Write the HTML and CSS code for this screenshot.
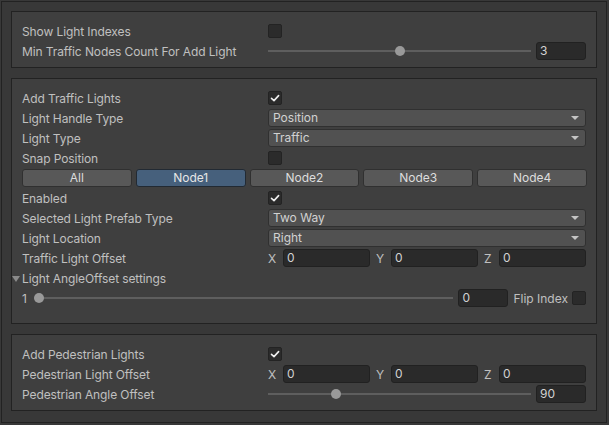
FILE: index.html
```html
<!DOCTYPE html>
<html>
<head>
<meta charset="utf-8">
<link rel="stylesheet" href="styles.css">
</head>
<body>
<div class="frame">
  <div class="box box-first">
    <div class="row"><div class="label">Show Light Indexes</div><div class="ctrl"><span class="check"></span></div></div>
    <div class="row"><div class="label">Min Traffic Nodes Count For Add Light</div>
      <div class="ctrl"><div class="slider"><div class="track"><span class="thumb" style="left:50%"></span></div></div><div class="field num">3</div></div></div>
  </div>

  <div class="box box-mid">
    <div class="row"><div class="label">Add Traffic Lights</div><div class="ctrl"><span class="check on"><svg viewBox="0 0 14 14" width="14" height="14"><path d="M3.5 7.3 L6 9.6 L10.6 4.6" fill="none" stroke="#eeeeee" stroke-width="1.6" stroke-linecap="round" stroke-linejoin="round"/></svg></span></div></div>
    <div class="row"><div class="label">Light Handle Type</div><div class="ctrl"><div class="dropdown">Position<span class="arrow"></span></div></div></div>
    <div class="row"><div class="label">Light Type</div><div class="ctrl"><div class="dropdown">Traffic<span class="arrow"></span></div></div></div>
    <div class="row"><div class="label">Snap Position</div><div class="ctrl"><span class="check"></span></div></div>
    <div class="row buttons">
      <div class="btn">All</div><div class="btn sel">Node1</div><div class="btn">Node2</div><div class="btn">Node3</div><div class="btn">Node4</div>
    </div>
    <div class="row"><div class="label">Enabled</div><div class="ctrl"><span class="check on"><svg viewBox="0 0 14 14" width="14" height="14"><path d="M3.5 7.3 L6 9.6 L10.6 4.6" fill="none" stroke="#eeeeee" stroke-width="1.6" stroke-linecap="round" stroke-linejoin="round"/></svg></span></div></div>
    <div class="row"><div class="label">Selected Light Prefab Type</div><div class="ctrl"><div class="dropdown">Two Way<span class="arrow"></span></div></div></div>
    <div class="row"><div class="label">Light Location</div><div class="ctrl"><div class="dropdown">Right<span class="arrow"></span></div></div></div>
    <div class="row"><div class="label">Traffic Light Offset</div>
      <div class="ctrl vec">
        <div class="axis"><span class="ax">X</span><div class="field">0</div></div>
        <div class="axis"><span class="ax">Y</span><div class="field">0</div></div>
        <div class="axis"><span class="ax">Z</span><div class="field">0</div></div>
      </div></div>
    <div class="row fold"><span class="fold-arrow"></span><div class="label">Light AngleOffset settings</div></div>
    <div class="row angle">
      <span class="small">1</span>
      <div class="slider"><div class="track"><span class="thumb" style="left:0%"></span></div></div>
      <div class="field num">0</div>
      <span class="small flip">Flip Index</span>
      <span class="check"></span>
    </div>
  </div>

  <div class="box box-last">
    <div class="row"><div class="label">Add Pedestrian Lights</div><div class="ctrl"><span class="check on"><svg viewBox="0 0 14 14" width="14" height="14"><path d="M3.5 7.3 L6 9.6 L10.6 4.6" fill="none" stroke="#eeeeee" stroke-width="1.6" stroke-linecap="round" stroke-linejoin="round"/></svg></span></div></div>
    <div class="row"><div class="label">Pedestrian Light Offset</div>
      <div class="ctrl vec">
        <div class="axis"><span class="ax">X</span><div class="field">0</div></div>
        <div class="axis"><span class="ax">Y</span><div class="field">0</div></div>
        <div class="axis"><span class="ax">Z</span><div class="field">0</div></div>
      </div></div>
    <div class="row"><div class="label">Pedestrian Angle Offset</div>
      <div class="ctrl"><div class="slider"><div class="track"><span class="thumb" style="left:25%"></span></div></div><div class="field num">90</div></div></div>
  </div>
</div>
</body>
</html>
```
FILE: styles.css
```css
* { box-sizing: border-box; }
html, body { margin: 0; padding: 0; }
body {
  background: #383838;
  font-family: Inter, "Noto Sans", sans-serif;
  font-size: 12px;
  color: #c0c0c0;
  width: 609px;
  height: 425px;
  overflow: hidden;
}
.frame {
  margin: 1px 0 0 1px;
  width: 606px;
  height: 422px;
  border: 1px solid #222222;
  padding: 9px 9px 0 9px;
  display: flex;
  flex-direction: column;
  gap: 10px;
}
.box {
  background: #3f3f3f;
  border: 1px solid #222222;
  padding: 9px 10px 6px 10px;
  width: 586px;
}
.box-mid { padding-bottom: 15px; }
.row {
  height: 20px;
  display: flex;
  align-items: center;
  position: relative;
}
.label {
  width: 246px;
  flex: none;
  white-space: nowrap;
  letter-spacing: -0.1px;
}
.ctrl {
  flex: 1;
  display: flex;
  align-items: center;
  height: 18px;
}
.check {
  width: 14px;
  height: 14px;
  background: #2b2b2b;
  border: 1px solid #232323;
  border-radius: 2px;
  display: inline-flex;
  align-items: center;
  justify-content: center;
  flex: none;
}
.check svg { display: block; margin: -1px; }
.slider {
  flex: 1;
  height: 18px;
  display: flex;
  align-items: center;
  padding: 0 5px;
  position: relative;
}
.slider::before {
  content: "";
  position: absolute;
  left: 0; right: 0;
  top: 8px;
  height: 2px;
  background: #5e5e5e;
}
.track {
  position: relative;
  flex: 1;
  height: 2px;
}
.thumb {
  position: absolute;
  top: -4px;
  width: 10px;
  height: 10px;
  margin-left: -5px;
  border-radius: 50%;
  background: #999999;
}
.field {
  height: 18px;
  background: #2a2a2a;
  border: 1px solid #212121;
  border-radius: 3px;
  color: #d2d2d2;
  padding: 0 3px;
  line-height: 16px;
  white-space: nowrap;
}
.num { width: 50px; flex: none; margin-left: 5px; }
.dropdown {
  flex: 1;
  height: 18px;
  background: #515151;
  border: 1px solid #303030;
  border-radius: 3px;
  color: #d2d2d2;
  padding: 0 4px;
  line-height: 16px;
  position: relative;
}
.arrow {
  position: absolute;
  right: 6px;
  top: 6px;
  width: 0; height: 0;
  border-left: 4px solid transparent;
  border-right: 4px solid transparent;
  border-top: 4px solid #c4c4c4;
}
.buttons {
  gap: 4px;
  margin-right: -1px;
}
.btn {
  flex: 1;
  height: 18px;
  background: #585858;
  border: 1px solid #303030;
  border-radius: 3px;
  color: #dddddd;
  text-align: center;
  line-height: 16px;
}
.btn.sel {
  background: #46607c;
  border-color: #222a33;
  color: #e6e6e6;
}
.vec { gap: 6px; }
.axis {
  flex: 1;
  display: flex;
  align-items: center;
}
.ax {
  width: 15px;
  flex: none;
}
.axis .field { flex: 1; }
.fold-arrow {
  position: absolute;
  left: -10px;
  top: 8px;
  width: 0; height: 0;
  border-left: 4px solid transparent;
  border-right: 4px solid transparent;
  border-top: 6px solid #8a8a8a;
}
.angle .small { flex: none; }
.angle .slider { margin-left: 7px; }
.angle .num { margin-left: 5px; }
.angle .flip { margin-left: 5px; margin-right: 4px; }
```
